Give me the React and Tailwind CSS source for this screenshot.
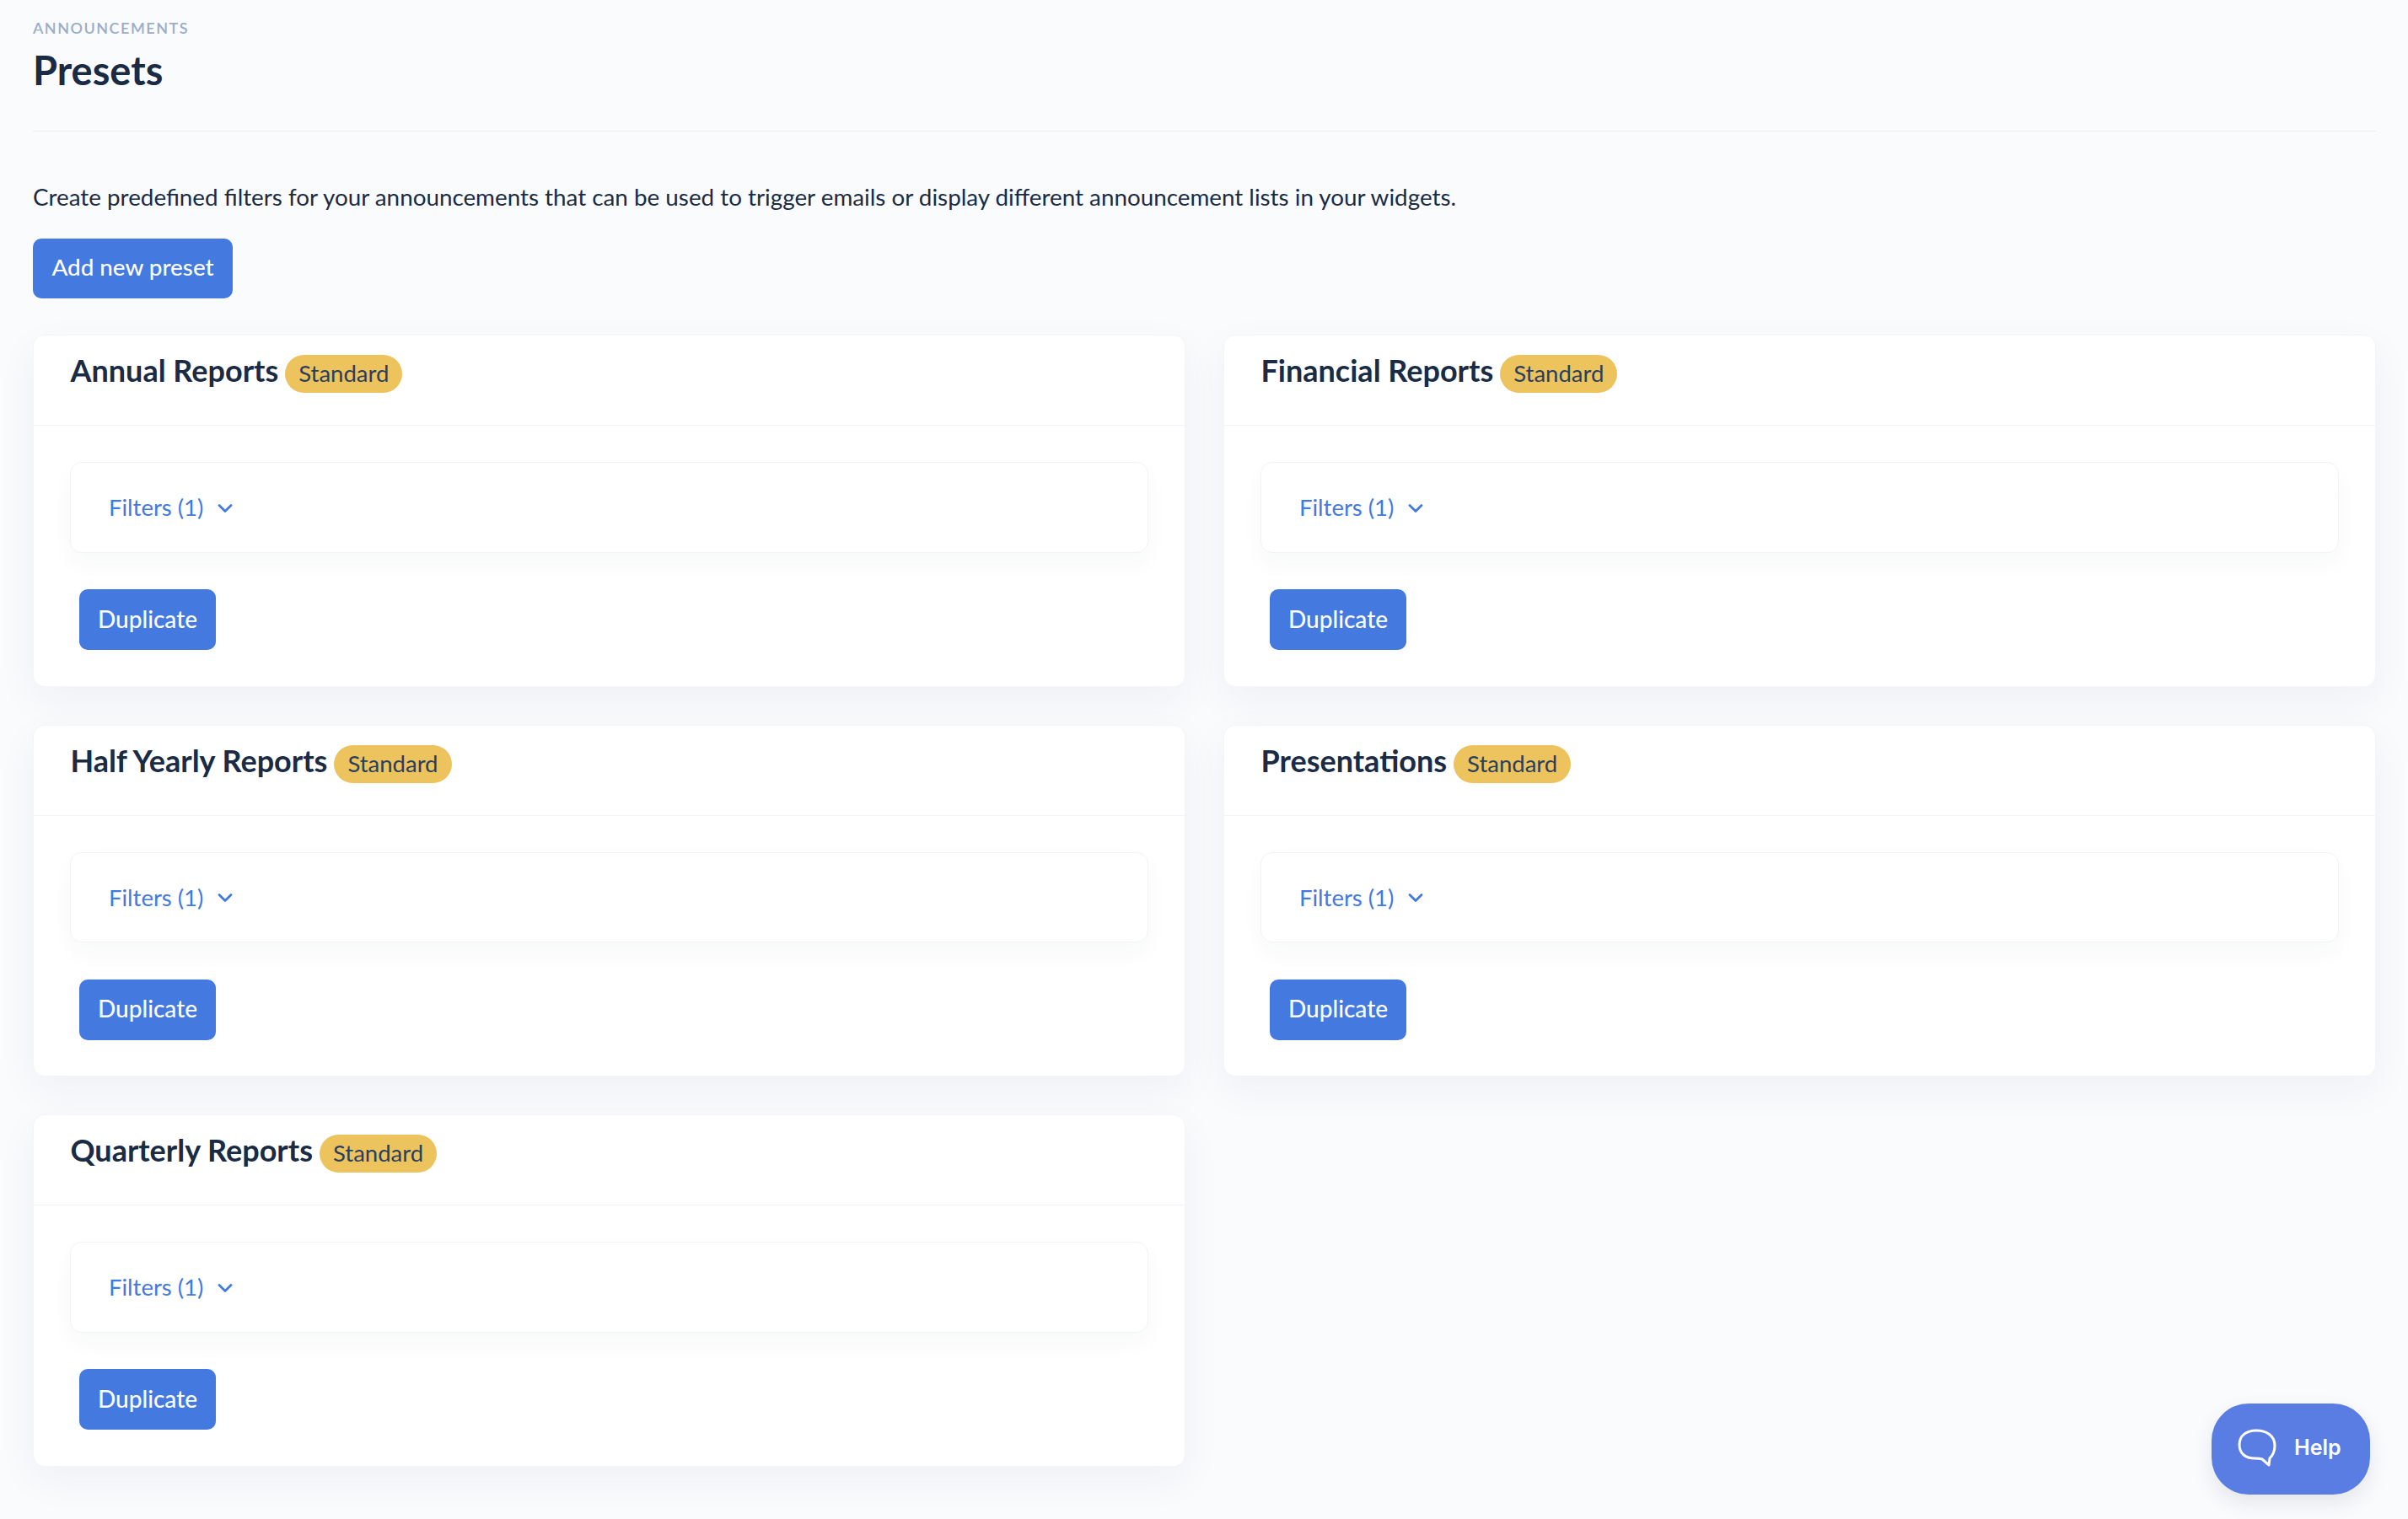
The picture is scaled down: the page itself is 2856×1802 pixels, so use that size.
import { ChevronDown } from 'lucide-react'

const presets = ['Annual Reports', 'Financial Reports', 'Half Yearly Reports', 'Presentations', 'Quarterly Reports']

const PresetCard = ({ name }) => (
  <div className="h-[417.5px] rounded-[14px] bg-white border border-[#f3f5f9] shadow-[0_16px_48px_rgba(26,43,69,0.05)]">
    <div className="h-[107px] border-b border-[#f1f3f8] pl-[43.5px] pt-[23px] flex items-start">
      <h2 className="text-[36px] leading-[37px] font-bold text-[#1a2b45]">{name}</h2>
      <span className="ml-[8px] h-[45px] px-[16px] rounded-full bg-[#ecc35c] text-[27.5px] leading-[44px] text-[#2a3f5f]">Standard</span>
    </div>
    <div className="px-[43px] pt-[43px]">
      <div className="h-[107.5px] rounded-[14px] bg-white border border-[#f1f3f8] shadow-[0_12px_28px_rgba(26,43,69,0.035)] pl-[45px] flex items-center text-[#4479e0]">
        <span className="text-[27.5px]">Filters (1)</span>
        <ChevronDown size={28} strokeWidth={2.4} className="ml-[12px] mt-[2px]" />
      </div>
      <button className="mt-[43.5px] ml-[11px] w-[162px] h-[72px] pb-[3px] rounded-[10px] bg-[#4479e0] text-white text-[28px] font-medium">Duplicate</button>
    </div>
  </div>
)

const App = () => {
  return (
    <div className="relative min-h-[1802px] bg-[#fafbfd] pl-[39px] pr-[38px] font-['Lato',sans-serif]">
      <div className="h-[156px] border-b border-[#eaedf3] pt-[21px]">
        <p className="text-[18px] leading-[24px] tracking-[1.5px] text-[#9badc9] font-semibold">ANNOUNCEMENTS</p>
        <h1 className="mt-[10px] text-[47px] leading-[56px] font-bold text-[#1a2b45]">Presets</h1>
      </div>
      <p className="mt-[60px] text-[27.8px] leading-[36px] text-[#1a2b45]">
        Create predefined filters for your announcements that can be used to trigger emails or display different announcement lists in your widgets.
      </p>
      <button className="mt-[31px] block w-[237px] h-[71px] pb-[4px] rounded-[10px] bg-[#4479e0] text-white text-[27.8px] font-medium">Add new preset</button>
      <div className="mt-[43px] grid grid-cols-2 gap-x-[45px] gap-y-[45px]">
        {presets.map((name) => <PresetCard key={name} name={name} />)}
      </div>
      <button className="absolute left-[2623px] top-[1665px] w-[188px] h-[108px] pb-[2px] rounded-[44px] bg-[#5a7de4] shadow-[0_10px_24px_rgba(26,43,69,0.1)] flex items-center text-white pl-[31px]">
        <svg width="46" height="46" viewBox="0 0 46 46" fill="none" stroke="currentColor" strokeWidth="3" strokeLinejoin="round">
          <path d="M22 2C11 2 2 7.5 2 19C2 29 9 35 20 35C23 35 26 35 29 36L37 43L38 35C41 32 44 27 44 20C44 8 34 2 22 2Z" />
        </svg>
        <span className="ml-[21px] text-[25px] font-semibold font-['Inter',sans-serif]">Help</span>
      </button>
    </div>
  )
}

export default App
